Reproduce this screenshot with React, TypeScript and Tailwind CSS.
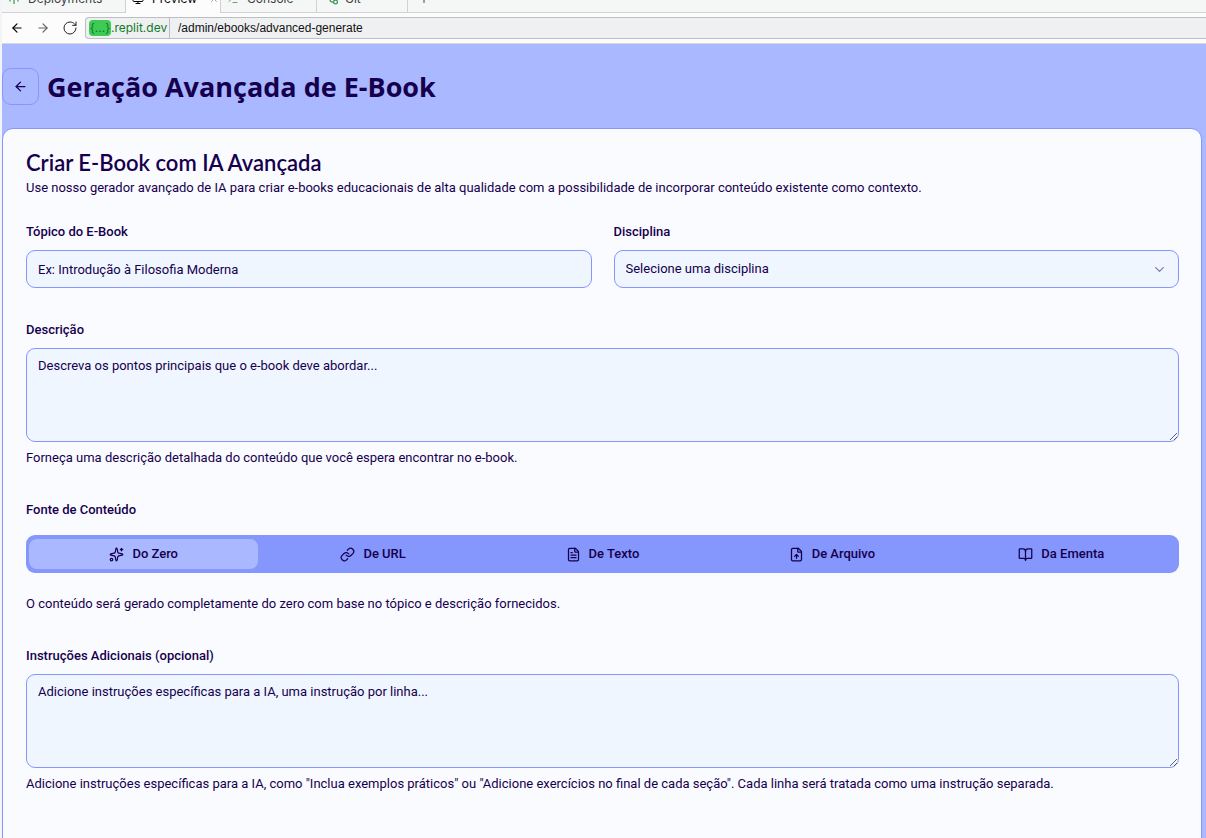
import { useState } from "react";
import type { ReactNode } from "react";
import {
  ArrowLeft,
  ArrowRight,
  BookOpen,
  ChevronDown,
  FileText,
  FileUp,
  Link,
  Monitor,
  Plus,
  RotateCw,
  Sparkles,
  Terminal,
  X,
} from "lucide-react";

const sources = [
  { id: "zero", label: "Do Zero", icon: Sparkles },
  { id: "url", label: "De URL", icon: Link },
  { id: "text", label: "De Texto", icon: FileText },
  { id: "file", label: "De Arquivo", icon: FileUp },
  { id: "syllabus", label: "Da Ementa", icon: BookOpen },
];

function DeployIcon() {
  return (
    <svg viewBox="0 0 12 12" className="size-3 text-[#3f9a55]" fill="none" stroke="currentColor" strokeWidth="1.25">
      <path d="M6 1v10M2 8.5V7a2 2 0 0 1 2-2h4a2 2 0 0 1 2 2v1.5" />
    </svg>
  );
}

function GitIcon() {
  return (
    <svg viewBox="0 0 12 12" className="size-3 text-[#3f9a55]" fill="none" stroke="currentColor" strokeWidth="1.25">
      <circle cx="8.5" cy="9" r="1.9" />
      <circle cx="3" cy="2.5" r="1.5" />
      <path d="M3 4v2.5A2.5 2.5 0 0 0 5.5 9h1M8.5 7V1" />
    </svg>
  );
}

function PaneTab({ active, className, children }: { active?: boolean; className: string; children: ReactNode }) {
  return (
    <button
      type="button"
      className={`flex h-7 shrink-0 items-center border-r border-[#cfd1d4] text-left text-[#3c4043] ${
        active ? "bg-[#fcfcfc] text-black" : "border-b bg-[#f5f7f6]"
      } ${className}`}
    >
      {children}
    </button>
  );
}

function BrowserChrome() {
  return (
    <header className="font-['Inter',sans-serif] text-[12px]">
      <nav aria-label="Painéis" className="flex h-[13px] items-end overflow-hidden bg-[#f5f7f6]">
        <PaneTab className="w-31 gap-2 pl-1.5">
          <DeployIcon />
          Deployments
        </PaneTab>
        <PaneTab active className="w-[95px] gap-2 pl-1.5">
          <Monitor className="size-3" />
          Preview
          <X className="ml-1 size-2.5 text-[#999]" />
        </PaneTab>
        <PaneTab className="w-24 gap-2 pl-1.5">
          <Terminal className="size-3 text-[#7d9a6a]" />
          Console
        </PaneTab>
        <PaneTab className="w-[91px] gap-1.5 pl-2.5">
          <GitIcon />
          Git
        </PaneTab>
        <div className="flex h-7 flex-1 items-center border-b border-[#cfd1d4] pl-2.5">
          <Plus className="size-3 text-[#3c4043]" />
        </div>
      </nav>
      <div className="flex h-[31px] items-center border-b border-[#d5d7dc] bg-[#fcfcfc]">
        <button type="button" aria-label="Voltar" className="ml-2 text-black">
          <ArrowLeft className="size-3.5" />
        </button>
        <button type="button" aria-label="Avançar" className="ml-3 text-[#5f6368]">
          <ArrowRight className="size-3.5" />
        </button>
        <button type="button" aria-label="Recarregar" className="ml-3 text-[#222]">
          <RotateCw className="size-4" strokeWidth={1.5} />
        </button>
        <div className="ml-[7px] flex h-[22px] flex-1 items-stretch rounded-l border-y border-l border-[#bbbfc2] bg-[#eff0f2]">
          <div className="flex w-21 items-center border-r border-[#bbbfc2] pl-[3px] text-[#0f7a26]">
            <span className="flex h-4 w-[22px] items-center justify-center rounded bg-[#3ecb55]">{"{...}"}</span>
            .replit.dev
          </div>
          <input
            aria-label="Caminho"
            defaultValue="/admin/ebooks/advanced-generate"
            className="min-w-0 flex-1 bg-transparent pl-2 font-['Liberation_Sans',sans-serif] text-[12px] text-[#111] outline-none"
          />
        </div>
      </div>
    </header>
  );
}

const fieldStyle =
  "block w-full rounded-[9px] border border-[#8596fc] bg-[#eff6ff] px-[11px] text-[#16004d] outline-none placeholder:text-[#16004d] placeholder:opacity-100";

export default function App() {
  const [source, setSource] = useState("zero");

  return (
    <div className="flex h-screen flex-col overflow-hidden border-l-2 border-[#f3f4f6] bg-[#aab8ff] font-['Roboto',sans-serif] text-[13px] leading-5 text-[#16004d]">
      <BrowserChrome />
      <main className="flex flex-1 flex-col pr-1">
        <div className="flex items-center gap-2 pt-6 pb-[23px]">
          <button
            type="button"
            aria-label="Voltar aos e-books"
            className="flex size-[37px] items-center justify-center rounded-[9px] border border-[#8596fc]"
          >
            <ArrowLeft className="size-[15px]" />
          </button>
          <h1 className="font-['Open_Sans',sans-serif] text-[27px] leading-9 font-bold">Geração Avançada de E-Book</h1>
        </div>

        <section className="shrink-0 rounded-[11px] border border-[#8596fc] bg-[#fafbff] pt-[22px] pr-[22px] pb-24 pl-[23px]">
          <h2 className="font-['Lato','Open_Sans',sans-serif] text-[22px] leading-6 font-semibold">
            Criar E-Book com IA Avançada
          </h2>
          <p className="mt-[3px]">
            Use nosso gerador avançado de IA para criar e-books educacionais de alta qualidade com a possibilidade de
            incorporar conteúdo existente como contexto.
          </p>

          <form className="mt-6 flex flex-col gap-8">
            <div className="grid grid-cols-2 gap-[22px]">
              <div className="flex flex-col gap-2">
                <label htmlFor="topic" className="font-medium">
                  Tópico do E-Book
                </label>
                <input id="topic" placeholder="Ex: Introdução à Filosofia Moderna" className={`${fieldStyle} h-[38px]`} />
              </div>
              <div className="flex flex-col gap-2">
                <label htmlFor="subject" className="font-medium">
                  Disciplina
                </label>
                <div className="relative">
                  <select id="subject" className={`${fieldStyle} h-[38px] appearance-none`}>
                    <option>Selecione uma disciplina</option>
                  </select>
                  <ChevronDown className="pointer-events-none absolute inset-y-0 right-3 my-auto size-[15px] opacity-50" />
                </div>
              </div>
            </div>

            <div>
              <label htmlFor="description" className="block font-medium">
                Descrição
              </label>
              <textarea
                id="description"
                placeholder="Descreva os pontos principais que o e-book deve abordar..."
                className={`${fieldStyle} mt-2 h-[94px] resize-y py-[7px]`}
              />
              <p className="mt-1.5">Forneça uma descrição detalhada do conteúdo que você espera encontrar no e-book.</p>
            </div>

            <div>
              <h3 className="font-medium">Fonte de Conteúdo</h3>
              <div role="tablist" className="mt-[15px] grid h-[38px] grid-cols-5 items-center rounded-[9px] bg-[#8596fc] px-[3px]">
                {sources.map(({ id, label, icon: Icon }) => (
                  <button
                    key={id}
                    type="button"
                    role="tab"
                    aria-selected={source === id}
                    onClick={() => setSource(id)}
                    className={`flex h-[30px] items-center justify-center gap-2 rounded-[8px] font-medium ${
                      source === id ? "bg-[#aab8ff]" : ""
                    }`}
                  >
                    <Icon className="size-[15px]" />
                    {label}
                  </button>
                ))}
              </div>
              <p className="mt-[21px]">
                O conteúdo será gerado completamente do zero com base no tópico e descrição fornecidos.
              </p>
            </div>

            <div>
              <label htmlFor="instructions" className="block font-medium">
                Instruções Adicionais (opcional)
              </label>
              <textarea
                id="instructions"
                placeholder="Adicione instruções específicas para a IA, uma instrução por linha..."
                className={`${fieldStyle} mt-2 h-[94px] resize-y py-[7px]`}
              />
              <p className="mt-1.5">
                Adicione instruções específicas para a IA, como "Inclua exemplos práticos" ou "Adicione exercícios no
                final de cada seção". Cada linha será tratada como uma instrução separada.
              </p>
            </div>
          </form>
        </section>
      </main>
    </div>
  );
}
